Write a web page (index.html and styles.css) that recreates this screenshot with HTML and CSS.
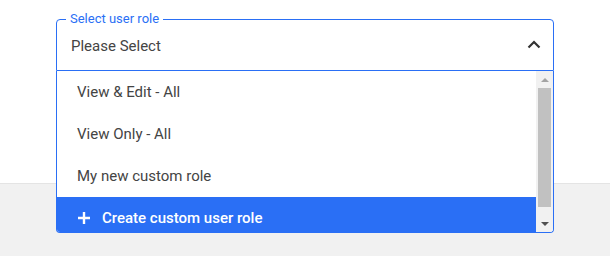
FILE: index.html
```html
<!DOCTYPE html>
<html lang="en">
<head>
  <meta charset="UTF-8">
  <title>Select user role</title>
  <link rel="stylesheet" href="styles.css">
</head>
<body>
  <div class="top-area">
    <div class="role-field">
      <span class="role-label">Select user role</span>
      <div class="role-value">Please Select</div>
      <svg class="chevron" width="14" height="9" viewBox="0 0 14 9">
        <path d="M1.5 7.5 L7 2 L12.5 7.5" fill="none" stroke="#333" stroke-width="2.2"/>
      </svg>

      <!-- open dropdown list -->
      <div class="role-menu">
        <ul class="role-list">
          <li class="role-item">View &amp; Edit - All</li>
          <li class="role-item">View Only - All</li>
          <li class="role-item">My new custom role</li>
          <li class="role-item create-item">
            <svg width="12" height="12" viewBox="0 0 12 12">
              <path d="M6 0 V12 M0 6 H12" stroke="#fff" stroke-width="2.4"/>
            </svg>
            Create custom user role
          </li>
        </ul>
        <div class="scrollbar">
          <div class="scroll-arrow"><span class="arrow-up"></span></div>
          <div class="scroll-track"><div class="scroll-thumb"></div></div>
          <div class="scroll-arrow"><span class="arrow-down"></span></div>
        </div>
      </div>
    </div>
  </div>
  <div class="bottom-area"></div>
</body>
</html>
```

FILE: styles.css
```css
body {
  margin: 0;
  font-family: Roboto, "Noto Sans", Arial, sans-serif;
  background: #f1f1f1;
}

.top-area {
  height: 164px;
  padding: 19px 0 0 56px;
  background: #fff;
  border-bottom: 1px solid #e4e4e4;
}

.bottom-area {
  height: 72px;
}

.role-field {
  position: relative;
  width: 470px;
  height: 50px;
  border: 1px solid #2a6ff5;
  border-radius: 4px 4px 0 0;
  display: flex;
  align-items: center;
  justify-content: space-between;
  padding: 0 12px 0 14px;
}

.role-label {
  position: absolute;
  top: -9px;
  left: 9px;
  padding: 0 4px;
  background: #fff;
  color: #2a6ff5;
  font-size: 13px;
  line-height: 16px;
}

.role-value {
  font-size: 15px;
  color: #444;
  margin-top: 1px;
}

.chevron {
  margin-top: -1px;
}

.role-menu {
  position: absolute;
  top: 51px;
  left: -1px;
  width: 496px;
  height: 161px;
  border: 1px solid #2a6ff5;
  border-top: none;
  border-radius: 0 0 4px 4px;
  background: #fff;
  display: flex;
  overflow: hidden;
}

.role-list {
  list-style: none;
  margin: 0;
  padding: 0;
  flex: 1;
}

.role-item {
  height: 42px;
  line-height: 42px;
  padding-left: 20px;
  font-size: 15px;
  color: #444;
}

.create-item {
  background: #2a6ff5;
  color: #fff;
  font-weight: 500;
  line-height: 40px;
  display: flex;
  align-items: center;
  gap: 12px;
  padding-left: 21px;
}

.scrollbar {
  width: 17px;
  background: #f1f1f1;
  display: flex;
  flex-direction: column;
}

.scroll-arrow {
  height: 17px;
  display: flex;
  align-items: center;
  justify-content: center;
}

.arrow-up,
.arrow-down {
  width: 0;
  height: 0;
  border-left: 4px solid transparent;
  border-right: 4px solid transparent;
}

.arrow-up {
  border-bottom: 4px solid #a3a3a3;
}

.arrow-down {
  border-top: 4px solid #505050;
}

.scroll-track {
  flex: 1;
  padding: 0 2px;
}

.scroll-thumb {
  height: 119px;
  background: #c1c1c1;
}
```
